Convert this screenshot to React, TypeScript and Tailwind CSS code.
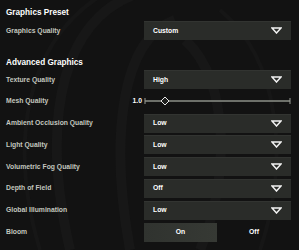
import React from 'react'

const font = { fontFamily: '"Liberation Sans", Arial, sans-serif' }

const Arrow = () => (
  <svg width="11" height="7" viewBox="0 0 11 7" className="shrink-0">
    <path d="M1 1 L10 1 L5.5 6 Z" fill="none" stroke="#f2f2f2" strokeWidth="1.5" strokeLinejoin="miter" />
  </svg>
)

const Select = ({ value }: { value: string }) => (
  <div className="w-[147px] h-[19px] shrink-0 bg-[#2a2c29] flex items-center justify-between pl-[9px] pr-[9px] shadow-[inset_0_1px_0_rgba(255,255,255,0.04)]">
    <span className="text-[6.8px] leading-[8px] font-bold text-white">{value}</span>
    <Arrow />
  </div>
)

const Label = ({ children }: { children: React.ReactNode }) => (
  <span className="text-[6.8px] leading-[8px] font-bold text-[#c2c6bf]">{children}</span>
)

const rows: { label: string; value: string }[] = [
  { label: 'Ambient Occlusion Quality', value: 'Low' },
  { label: 'Light Quality', value: 'Low' },
  { label: 'Volumetric Fog Quality', value: 'Low' },
  { label: 'Depth of Field', value: 'Off' },
  { label: 'Global Illumination', value: 'Low' },
]

const Watermark = () => (
  <svg className="absolute inset-0 pointer-events-none" width="299" height="250" viewBox="0 0 299 250">
    <g fill="none" stroke="#171717" strokeWidth="10">
      <path d="M150 -10 C 60 10, 40 120, 70 250" />
      <path d="M175 20 C 120 40, 110 140, 130 250" />
      <path d="M185 40 C 230 80, 230 180, 200 250" />
    </g>
    <g fill="none" stroke="#161616" strokeWidth="4">
      <path d="M110 -10 C 20 40, 10 150, 40 250" />
      <path d="M220 10 C 280 60, 290 160, 260 250" />
    </g>
  </svg>
)

export default function App() {
  return (
    <div className="relative w-[299px] h-[250px] overflow-hidden bg-[#121212] leading-[8px]" style={font}>
      <Watermark />
      <div className="relative flex flex-col pl-[6px] pr-[8px] pt-[8px]">
        <h2 className="text-[8.2px] leading-[10px] font-bold text-white">Graphics Preset</h2>
        <div className="flex items-center mt-[3px]">
          <div className="flex-1 flex items-center"><Label>Graphics Quality</Label></div>
          <Select value="Custom" />
        </div>

        <h2 className="text-[8.2px] leading-[10px] font-bold text-white mt-[18px]">Advanced Graphics</h2>
        <div className="flex flex-col gap-[2.8px] mt-[2px]">
          <div className="flex items-center">
            <div className="flex-1 flex items-center"><Label>Texture Quality</Label></div>
            <Select value="High" />
          </div>

          <div className="flex items-center h-[19px]">
            <div className="flex-1 flex items-center justify-between pr-[2px]">
              <Label>Mesh Quality</Label>
              <span className="text-[6.8px] leading-[8px] font-bold text-white">1.0</span>
            </div>
            <div className="w-[147px] h-[19px] shrink-0 flex items-center">
              <svg width="147" height="10" viewBox="0 0 147 10">
                <line x1="1" y1="2" x2="1" y2="8" stroke="#9a9d96" strokeWidth="1" />
                <line x1="1" y1="5" x2="146" y2="5" stroke="#8d9089" strokeWidth="1.3" />
                <line x1="146" y1="2" x2="146" y2="8" stroke="#9a9d96" strokeWidth="1" />
                <path d="M21 1 L25 5 L21 9 L17 5 Z" fill="#1e1f1d" stroke="#e6e6e6" strokeWidth="1" />
              </svg>
            </div>
          </div>

          {rows.map(r => (
            <div key={r.label} className="flex items-center">
              <div className="flex-1 flex items-center"><Label>{r.label}</Label></div>
              <Select value={r.value} />
            </div>
          ))}

          <div className="flex items-center">
            <div className="flex-1 flex items-center"><Label>Bloom</Label></div>
            <div className="w-[147px] h-[19px] shrink-0 flex">
              <div className="w-[73px] h-full bg-gradient-to-r from-[#30332f] to-[#363934] flex items-center justify-center">
                <span className="text-[6.8px] leading-[8px] font-bold text-white">On</span>
              </div>
              <div className="flex-1 h-full flex items-center justify-center">
                <span className="text-[6.8px] leading-[8px] font-bold text-white">Off</span>
              </div>
            </div>
          </div>
        </div>
      </div>
    </div>
  )
}
